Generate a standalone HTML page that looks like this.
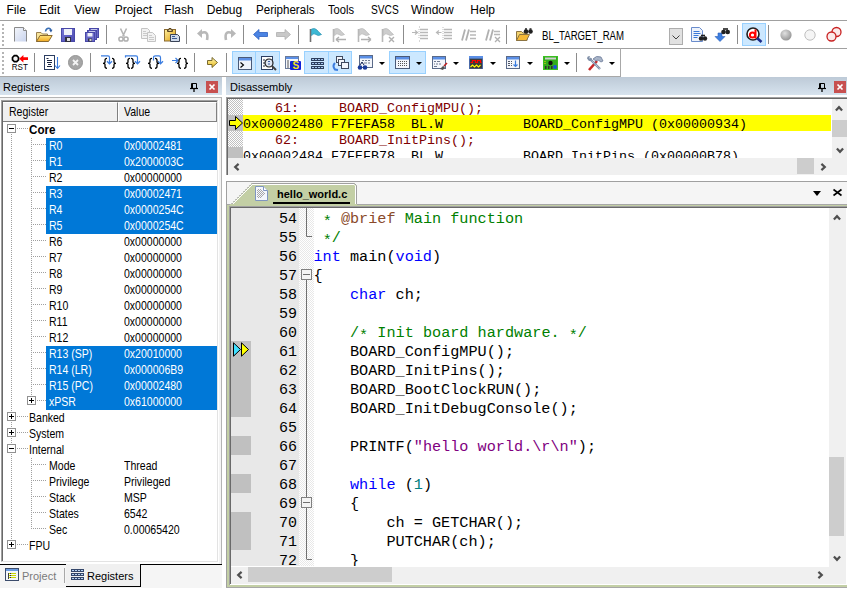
<!DOCTYPE html>
<html><head><meta charset="utf-8">
<style>
*{margin:0;padding:0;box-sizing:border-box}
html,body{width:847px;height:590px;overflow:hidden;background:#fff;position:relative;font-family:"Liberation Sans",sans-serif;font-size:12px;color:#000}
.a{position:absolute}
svg{position:absolute;overflow:visible}
.m{position:absolute;top:3px;font-size:12px;line-height:14px;color:#000;white-space:nowrap}
.grip{position:absolute;width:2px;background-image:linear-gradient(#b4b4b4 2px,transparent 2px);background-size:2px 4px}
.sep{position:absolute;width:1px;background:#8c8c8c}
.hi{position:absolute;background:#cce8ff;border:1px solid #99d1ff}
.title{position:absolute;height:18px;background:linear-gradient(#bdcad7,#d7e3ee)}
.ttext{position:absolute;font-size:11px;line-height:13px;white-space:nowrap}
.close{position:absolute;width:12px;height:12px;background:#c75050}
.rt{position:absolute;height:16px;line-height:15px;font-size:13.5px;white-space:nowrap;transform:scaleX(0.78);transform-origin:0 0}
.dl{position:absolute;left:243px;height:16px;line-height:16px;font-size:13.33px;white-space:pre;font-family:"Liberation Mono",monospace}
.cl{position:absolute;height:19px;line-height:19px;font-size:15.2px;white-space:pre;font-family:"Liberation Mono",monospace}
.ln{position:absolute;width:37px;text-align:right;height:19px;line-height:19px;font-size:15px;font-family:"Liberation Mono",monospace;color:#000}
.kw{color:#0000ff}
.cm{color:#008000}
.st{color:#800080}
.nm{color:#008080}
.as{position:relative;top:3px}
.dx{color:#8a4a2a}
.chk{background-color:#fff;background-image:repeating-conic-gradient(#c0c0c0 0 25%,#fff 0 50%);background-size:2px 2px}
.chk2{background-color:#fff;background-image:repeating-conic-gradient(#e8e8e8 0 25%,#fff 0 50%);background-size:2px 2px}
.dd{position:absolute;width:0;height:0;border-left:3px solid transparent;border-right:3px solid transparent;border-top:3px solid #000}
</style></head><body>

<!-- MENU -->
<div class="m" style="left:6.6px">File</div>
<div class="m" style="left:39.3px">Edit</div>
<div class="m" style="left:74.2px">View</div>
<div class="m" style="left:114.7px">Project</div>
<div class="m" style="left:164.3px">Flash</div>
<div class="m" style="left:206.8px">Debug</div>
<div class="m" style="left:256.3px;transform:scaleX(0.964);transform-origin:0 0">Peripherals</div>
<div class="m" style="left:327.9px;transform:scaleX(0.93);transform-origin:0 0">Tools</div>
<div class="m" style="left:370.6px;transform:scaleX(0.85);transform-origin:0 0">SVCS</div>
<div class="m" style="left:411.0px">Window</div>
<div class="m" style="left:470.3px">Help</div>

<!-- TOOLBARS -->
<div class="a" style="left:0;top:20px;width:847px;height:1px;background:#a0a0a0"></div>
<div class="a" style="left:0;top:48px;width:847px;height:1px;background:#a0a0a0"></div>
<div class="a" style="left:620px;top:48px;width:1px;height:29px;background:#a8a8a8"></div>
<div class="a" style="left:0;top:76px;width:621px;height:1px;background:#a8a8a8"></div>
<div class="grip" style="left:2px;top:24px;height:22px"></div>
<div class="grip" style="left:2px;top:52px;height:22px"></div>
<!-- toolbar1 icons -->
<svg style="left:14px;top:27px" width="13" height="15" viewBox="0 0 13 15"><defs><linearGradient id="gdoc" x1="0" y1="0" x2="1" y2="1"><stop offset="0" stop-color="#f4f6fb"/><stop offset="1" stop-color="#c9d4ee"/></linearGradient></defs><path d="M0.5 14.5V0.5h9l3 3v11" fill="url(#gdoc)" stroke="#8a8a8a"/><path d="M9.5 0.5v3h3" fill="#fff" stroke="#8a8a8a"/></svg>
<svg style="left:36px;top:27px" width="17" height="15" viewBox="0 0 17 15"><defs><linearGradient id="gf" x1="0" y1="0" x2="0" y2="1"><stop offset="0" stop-color="#ffe27a"/><stop offset="1" stop-color="#f0a820"/></linearGradient></defs><path d="M0.5 14.5V5.5h4.5l1.5 1.5h5v7.5z" fill="#f8e49a" stroke="#9a8050"/><path d="M0.5 14.5l3.5-6h12.2l-3.7 6z" fill="url(#gf)" stroke="#8a6a30"/><path d="M9.5 4.5Q10 1 13 1.2Q14.5 1.5 15 3" stroke="#3a6fb5" stroke-width="1.5" fill="none"/><path d="M13 2.8h3.5L15 5.5z" fill="#2c5aa0"/></svg>
<svg style="left:61px;top:28px" width="14" height="14" viewBox="0 0 14 14"><defs><linearGradient id="gs" x1="0" y1="0" x2="1" y2="1"><stop offset="0" stop-color="#7878d8"/><stop offset="1" stop-color="#4a4ab0"/></linearGradient></defs><rect x="0.5" y="0.5" width="13" height="13" fill="url(#gs)" stroke="#4848a8"/><rect x="3" y="1" width="8" height="6" fill="#eef0f8"/><rect x="4" y="9" width="6" height="5" fill="#303040"/><rect x="6" y="10" width="3" height="3" fill="#e0e0e0"/></svg>
<svg style="left:85px;top:28px" width="14" height="14" viewBox="0 0 14 14"><rect x="4.5" y="0.5" width="9" height="9" fill="#6a6ac8" stroke="#4848a8"/><rect x="6" y="1.3" width="6" height="1.5" fill="#eef0f8"/><rect x="2.5" y="2.5" width="9" height="9" fill="#6a6ac8" stroke="#4848a8"/><rect x="4" y="3.3" width="6" height="1.5" fill="#eef0f8"/><rect x="0.5" y="4.5" width="9" height="9" fill="#6a6ac8" stroke="#4848a8"/><rect x="2.5" y="5" width="5" height="3.5" fill="#eef0f8"/><rect x="3" y="10.5" width="4" height="3" fill="#303040"/><rect x="4.5" y="11" width="2" height="2" fill="#d0d0d0"/></svg>
<div class="sep" style="left:106px;top:25px;height:19px"></div>
<svg style="left:118px;top:28px" width="11" height="14" viewBox="0 0 11 14"><path d="M2.5 0.5L6.3 8.5M8.5 0.5L4.7 8.5" stroke="#b4b4b4" stroke-width="1.6"/><circle cx="3" cy="11" r="2.1" fill="none" stroke="#b0b0b0" stroke-width="1.5"/><circle cx="8" cy="11" r="2.1" fill="none" stroke="#b0b0b0" stroke-width="1.5"/></svg>
<svg style="left:141px;top:28px" width="15" height="14" viewBox="0 0 15 14"><path d="M0.5 0.5h6l2 2v8h-8z" fill="#f2f2f2" stroke="#c4c4c4"/><path d="M6.5 4.5h5l3 3v6h-8z" fill="#f2f2f2" stroke="#c4c4c4"/><path d="M2 3.5h3M2 5.5h4M2 7.5h4M8 7.5h3M8 9.5h5M8 11.5h5" stroke="#cacaca"/></svg>
<svg style="left:164px;top:28px" width="16" height="14" viewBox="0 0 16 14"><defs><linearGradient id="gp" x1="0" y1="0" x2="1" y2="1"><stop offset="0" stop-color="#fff0a0"/><stop offset="1" stop-color="#e0a010"/></linearGradient></defs><rect x="0.5" y="1.5" width="11" height="11.5" fill="url(#gp)" stroke="#8a6a30"/><path d="M3.5 3.5h5V2h-1.5V0.5h-2V2h-1.5z" fill="#e8d8a0" stroke="#5a4520"/><path d="M6.5 6.5h7l2 2v5h-9z" fill="#cfdaea" stroke="#3a4458"/><path d="M8 8.5h3M8 10.5h5" stroke="#3a5a90" stroke-width="1"/></svg>
<div class="sep" style="left:186px;top:25px;height:19px"></div>
<svg style="left:197px;top:28px" width="14" height="13" viewBox="0 0 14 13"><path d="M4 5Q12 2 10 12" stroke="#b8b8b8" stroke-width="2.6" fill="none"/><path d="M0 5.5L5 1v9z" fill="#b8b8b8"/></svg>
<svg style="left:222px;top:28px" width="14" height="13" viewBox="0 0 14 13"><path d="M10 5Q2 2 4 12" stroke="#b8b8b8" stroke-width="2.6" fill="none"/><path d="M14 5.5L9 1v9z" fill="#b8b8b8"/></svg>
<div class="sep" style="left:243px;top:25px;height:19px"></div>
<svg style="left:253px;top:29px" width="15" height="11" viewBox="0 0 15 11"><path d="M0.5 5.5L6 0.5v3h8.5v4H6v3z" fill="#4b84e3" stroke="#2d5fc0" stroke-width="0.8"/></svg>
<svg style="left:276px;top:29px" width="15" height="11" viewBox="0 0 15 11"><path d="M14.5 5.5L9 0.5v3H0.5v4H9v3z" fill="#c8c8c8" stroke="#b0b0b0" stroke-width="0.8"/></svg>
<div class="sep" style="left:298px;top:25px;height:19px"></div>
<svg style="left:309px;top:28px" width="13" height="14" viewBox="0 0 13 14"><path d="M1.5 1v13" stroke="#707070" stroke-width="1.6"/><path d="M2.5 1Q6 -0.5 8 2T12.5 6.5Q9 8.5 7 6.5T2.5 7.5z" fill="#3cb8d4" stroke="#2a90b0" stroke-width="0.7"/></svg>
<svg style="left:332px;top:28px" width="15" height="14" viewBox="0 0 15 14"><path d="M1.5 1v13" stroke="#b8b8b8" stroke-width="1.6"/><path d="M2.5 1Q6 -0.5 8 2T12.5 6.5Q9 8.5 7 6.5T2.5 7.5z" fill="#cdcdcd" stroke="#b8b8b8" stroke-width="0.7"/><path d="M4 11.5h10M4 11.5l3-2.5M4 11.5l3 2.5" stroke="#b0b0b0" stroke-width="1.4"/></svg>
<svg style="left:357px;top:28px" width="15" height="14" viewBox="0 0 15 14"><path d="M1.5 1v13" stroke="#b8b8b8" stroke-width="1.6"/><path d="M2.5 1Q6 -0.5 8 2T12.5 6.5Q9 8.5 7 6.5T2.5 7.5z" fill="#cdcdcd" stroke="#b8b8b8" stroke-width="0.7"/><path d="M4 11.5h10M14 11.5l-3-2.5M14 11.5l-3 2.5" stroke="#b0b0b0" stroke-width="1.4"/></svg>
<svg style="left:381px;top:28px" width="15" height="14" viewBox="0 0 15 14"><path d="M1.5 1v13" stroke="#b8b8b8" stroke-width="1.6"/><path d="M2.5 1Q6 -0.5 8 2T12.5 6.5Q9 8.5 7 6.5T2.5 7.5z" fill="#cdcdcd" stroke="#b8b8b8" stroke-width="0.7"/><path d="M8 9l5 5M13 9l-5 5" stroke="#b0b0b0" stroke-width="1.4"/></svg>
<div class="sep" style="left:403px;top:25px;height:19px"></div>
<svg style="left:412px;top:26px" width="17" height="16" viewBox="0 0 17 16"><path d="M7 1h1M7 15h1" stroke="#b0b0b0"/><path d="M8 3.5h8M8 6.5h8M8 9.5h8M8 12.5h8" stroke="#b8b8b8" stroke-width="1.6"/><path d="M0 6.5h5M3 4.5l2.5 2-2.5 2" stroke="#b8b8b8" stroke-width="1.2" fill="none"/><path d="M7 3v10" stroke="#c0c0c0" stroke-dasharray="1 1"/></svg>
<svg style="left:436px;top:26px" width="17" height="16" viewBox="0 0 17 16"><path d="M8 3.5h8M8 6.5h8M8 9.5h8M8 12.5h8" stroke="#b8b8b8" stroke-width="1.6"/><path d="M0.5 6.5h5M3 4.5L0.5 6.5 3 8.5" stroke="#b8b8b8" stroke-width="1.2" fill="none"/><path d="M7 1v14" stroke="#c0c0c0" stroke-dasharray="1 1"/></svg>
<svg style="left:461px;top:29px" width="15" height="12" viewBox="0 0 15 12"><path d="M4 0.5L1 11.5M8 0.5L5 11.5" stroke="#b0b0b0" stroke-width="1.8"/><path d="M9 2.5h6M9 6h6M9 9.5h6" stroke="#b8b8b8" stroke-width="1.3"/></svg>
<svg style="left:485px;top:29px" width="16" height="13" viewBox="0 0 16 13"><path d="M4 0.5L1 11.5M8 0.5L5 11.5" stroke="#b0b0b0" stroke-width="1.8"/><path d="M9 2.5h6M9 5.5h6" stroke="#b8b8b8" stroke-width="1.3"/><path d="M10 8l5 5M15 8l-5 5" stroke="#b0b0b0" stroke-width="1.3"/></svg>
<div class="sep" style="left:506px;top:25px;height:19px"></div>
<svg style="left:516px;top:28px" width="17" height="13" viewBox="0 0 17 13"><path d="M0.5 12.5V3.5h5l1.5 1.5h4v7.5z" fill="#f3d36e" stroke="#8c7443"/><path d="M0.5 12.5l3-6h10l-3 6z" fill="#f5b936" stroke="#8c7443"/><circle cx="10" cy="3.5" r="2.3" fill="#202020"/><circle cx="14.5" cy="3.5" r="2.3" fill="#202020"/><path d="M9 1h2M13.5 1h2" stroke="#202020" stroke-width="1.5"/></svg>
<div class="a" style="left:542px;top:29px;font-size:12px;line-height:14px;white-space:nowrap;transform:scaleX(0.8);transform-origin:0 0">BL_TARGET_RAM</div>
<div class="a" style="left:669px;top:28px;width:14px;height:17px;background:#e1e1e1;border:1px solid #adadad"></div>
<svg style="left:672px;top:35px" width="9" height="5"><path d="M0.5 0.5L4 4 7.5 0.5" stroke="#404040" fill="none"/></svg>
<svg style="left:691px;top:27px" width="16" height="15" viewBox="0 0 16 15"><path d="M0.5 14.5V0.5h8l3 3v11z" fill="#eef3fb" stroke="#6a8ccc"/><path d="M2.5 4.5h6M2.5 6.5h7M2.5 8.5h5M2.5 10.5h4" stroke="#3a78d8"/><circle cx="10" cy="11.5" r="2.2" fill="#202020"/><circle cx="14" cy="11.5" r="2.2" fill="#202020"/><path d="M10 8.5h4" stroke="#202020" stroke-width="1.6"/></svg>
<svg style="left:714px;top:28px" width="16" height="14" viewBox="0 0 16 14"><path d="M4 5v3.5H1l5 5 5-5H8V5z" fill="#3e7fe0" stroke="#2c60b8" stroke-width="0.6"/><circle cx="9.5" cy="4" r="2.3" fill="#202020"/><circle cx="13.7" cy="4" r="2.3" fill="#202020"/><path d="M9 1h5" stroke="#202020" stroke-width="1.6"/></svg>
<div class="sep" style="left:737px;top:25px;height:19px"></div>
<div class="hi" style="left:742px;top:23px;width:24px;height:23px"></div>
<svg style="left:746px;top:27px" width="17" height="16" viewBox="0 0 17 16"><circle cx="7" cy="7" r="6" fill="#fff" stroke="#202020" stroke-width="1.6"/><path d="M11 11l4.5 4" stroke="#1a2a8a" stroke-width="2.6"/><path d="M9.5 2.5v9" stroke="#ff0000" stroke-width="2"/><circle cx="6.5" cy="8" r="2.6" fill="none" stroke="#ff0000" stroke-width="2"/></svg>
<div class="sep" style="left:768px;top:25px;height:19px"></div>
<svg style="left:780px;top:29px" width="12" height="12"><defs><radialGradient id="gb" cx="0.4" cy="0.35" r="0.7"><stop offset="0" stop-color="#e0e0e0"/><stop offset="1" stop-color="#909090"/></radialGradient></defs><circle cx="6" cy="6" r="5.6" fill="url(#gb)"/></svg>
<svg style="left:804px;top:29px" width="12" height="12"><circle cx="6" cy="6" r="5.2" fill="#f5f5f5" stroke="#c0c0c0"/></svg>
<svg style="left:826px;top:27px" width="16" height="15" viewBox="0 0 16 15"><circle cx="10.5" cy="5" r="4.5" fill="#fbeaea" stroke="#c82020" stroke-width="1.3"/><circle cx="5.5" cy="9.5" r="4.5" fill="#fbeaea" stroke="#c82020" stroke-width="1.3"/></svg>

<!-- toolbar2 icons -->
<svg style="left:11px;top:54px" width="18" height="16" viewBox="0 0 18 16"><path d="M3.3 1.7h2.4l1.8 1.8v2.4l-1.8 1.8H3.3L1.5 5.9V3.5z" fill="#f4f4f4" stroke="#000" stroke-width="1.7"/><path d="M8.2 4.7L12.4 1v2.3h4.6v2.8h-4.6v2.3z" fill="#ff0000"/><text x="0.8" y="15.8" font-family="Liberation Sans" font-size="9.5" fill="#000" textLength="16" lengthAdjust="spacingAndGlyphs">RST</text></svg>
<div class="sep" style="left:34px;top:53px;height:19px"></div>
<svg style="left:44px;top:55px" width="17" height="15" viewBox="0 0 17 15"><rect x="0.5" y="0.5" width="10" height="14" fill="#fff" stroke="#2c3e62"/><path d="M2.5 3.5h2M3 5.5h5M3 7.5h5M4 9.5h3M3 11.5h5" stroke="#1a2540"/><path d="M13.5 2v11M11 10.5l2.5 3 2.5-3" stroke="#3b7de0" stroke-width="1.1" fill="none"/></svg>
<svg style="left:68px;top:55px" width="15" height="15"><circle cx="7.5" cy="7.5" r="7" fill="#a6a6a6" stroke="#959595"/><path d="M5 5l5 5M10 5l-5 5" stroke="#f4f4f4" stroke-width="1.8"/></svg>
<div class="sep" style="left:90px;top:53px;height:19px"></div>
<svg style="left:100px;top:55px" width="17" height="14" viewBox="0 0 17 14"><path d="M1 0.8H8Q9.5 0.8 9.5 2.5V8" stroke="#3b7de0" stroke-width="1.2" fill="none"/><path d="M7 6.3l2.5 2.5 2.5-2.5" stroke="#3b7de0" stroke-width="1.3" fill="none"/><path d="M7 3.3Q5 3.3 5 5.3V7.3Q5 8.3 3 8.3Q5 8.3 5 9.3V11.6Q5 13.4 7 13.4" stroke="#000" stroke-width="1.3" fill="none"/><path d="M12 3.3Q14 3.3 14 5.3V7.3Q14 8.3 16 8.3Q14 8.3 14 9.3V11.6Q14 13.4 12 13.4" stroke="#000" stroke-width="1.3" fill="none"/></svg>
<svg style="left:124px;top:55px" width="17" height="14" viewBox="0 0 17 14"><path d="M1.5 2.5V0.8H12Q13.5 0.8 13.5 2.5V8" stroke="#3b7de0" stroke-width="1.2" fill="none"/><path d="M11 6.3l2.5 2.5 2.5-2.5" stroke="#3b7de0" stroke-width="1.3" fill="none"/><path d="M6 3.3Q4 3.3 4 5.3V7.3Q4 8.3 2 8.3Q4 8.3 4 9.3V11.6Q4 13.4 6 13.4" stroke="#000" stroke-width="1.3" fill="none"/><path d="M7 3.3Q9 3.3 9 5.3V7.3Q9 8.3 11 8.3Q9 8.3 9 9.3V11.6Q9 13.4 7 13.4" stroke="#000" stroke-width="1.3" fill="none"/></svg>
<svg style="left:147px;top:55px" width="17" height="14" viewBox="0 0 17 14"><path d="M6.5 5.5V2.5Q6.5 0.8 8.5 0.8H12Q13.5 0.8 13.5 2.5V8" stroke="#3b7de0" stroke-width="1.2" fill="none"/><path d="M11 6.3l2.5 2.5 2.5-2.5" stroke="#3b7de0" stroke-width="1.3" fill="none"/><path d="M5 3.3Q3 3.3 3 5.3V7.3Q3 8.3 1 8.3Q3 8.3 3 9.3V11.6Q3 13.4 5 13.4" stroke="#000" stroke-width="1.3" fill="none"/><path d="M8 3.3Q10 3.3 10 5.3V7.3Q10 8.3 12 8.3Q10 8.3 10 9.3V11.6Q10 13.4 8 13.4" stroke="#000" stroke-width="1.3" fill="none"/></svg>
<svg style="left:171px;top:55px" width="18" height="14" viewBox="0 0 18 14"><path d="M1 5.5h6M4.5 3l2.5 2.5-2.5 2.5" stroke="#3b7de0" stroke-width="1.2" fill="none"/><path d="M10 3.3Q8 3.3 8 5.3V7.3Q8 8.3 6 8.3Q8 8.3 8 9.3V11.6Q8 13.4 10 13.4" stroke="#000" stroke-width="1.3" fill="none"/><path d="M13 3.3Q15 3.3 15 5.3V7.3Q15 8.3 17 8.3Q15 8.3 15 9.3V11.6Q15 13.4 13 13.4" stroke="#000" stroke-width="1.3" fill="none"/></svg>
<div class="sep" style="left:194px;top:53px;height:19px"></div>
<svg style="left:207px;top:57px" width="11" height="11" viewBox="0 0 11 11"><defs><linearGradient id="gya" x1="0" y1="0" x2="0" y2="1"><stop offset="0" stop-color="#fff8b0"/><stop offset="1" stop-color="#e8b820"/></linearGradient></defs><path d="M0.5 3.5h4.5V0.5l5.5 5-5.5 5v-3H0.5z" fill="url(#gya)" stroke="#6a5a20" stroke-width="0.9"/></svg>
<div class="sep" style="left:226px;top:53px;height:19px"></div>
<div class="hi" style="left:232px;top:51px;width:48px;height:23px"></div>
<div class="a" style="left:255px;top:52px;width:1px;height:21px;background:#99d1ff"></div>
<svg style="left:238px;top:57px" width="14" height="13" viewBox="0 0 14 13"><rect x="0.5" y="0.5" width="13" height="12" fill="#f0f4fb" stroke="#4a5a78"/><rect x="1" y="1" width="12" height="2.5" fill="#5b8fe6"/><path d="M2.5 5.5l3 2.5-3 2.5" stroke="#000" stroke-width="1.1" fill="none"/></svg>
<svg style="left:261px;top:56px" width="17" height="15" viewBox="0 0 17 15"><rect x="0.5" y="0.5" width="11" height="13" fill="#fff" stroke="#2c3e62"/><path d="M2 4h2M2 7h2M2 10h2" stroke="#1a2540"/><circle cx="8" cy="7" r="4" fill="#dde6f3" stroke="#202020" stroke-width="1.2"/><path d="M7 5.5h2M7 8h2" stroke="#3a5aa0" stroke-width="1"/><path d="M11 10l4 4" stroke="#404040" stroke-width="2"/></svg>
<svg style="left:285px;top:56px" width="16" height="14" viewBox="0 0 16 14"><rect x="0.5" y="0.5" width="13" height="12" fill="#f4f6fb" stroke="#6a7a98"/><rect x="1" y="1" width="12" height="2" fill="#5b8fe6"/><path d="M3 4v8" stroke="#555"/><rect x="5" y="5" width="11" height="9" rx="1" fill="#1020d8"/><text x="7.5" y="13" font-family="Liberation Sans" font-size="10" font-weight="bold" fill="#f0e020">S</text></svg>
<div class="hi" style="left:304px;top:51px;width:48px;height:23px"></div>
<div class="a" style="left:328px;top:52px;width:1px;height:21px;background:#99d1ff"></div>
<svg style="left:311px;top:58px" width="13" height="11" viewBox="0 0 13 11"><rect x="0" y="0" width="13" height="3" rx="0.5" fill="#2d3f5e"/><rect x="0" y="4" width="13" height="3" rx="0.5" fill="#2d3f5e"/><rect x="0" y="8" width="13" height="3" rx="0.5" fill="#2d3f5e"/><path d="M1 1.5h11M1 5.5h11M1 9.5h11" stroke="#a8c8f0" stroke-dasharray="2 1"/></svg>
<svg style="left:332px;top:56px" width="17" height="15" viewBox="0 0 17 15"><rect x="4.5" y="0.5" width="6" height="6" fill="#f4f6fb" stroke="#404a60"/><rect x="6.5" y="3.5" width="6" height="6" fill="#f4f6fb" stroke="#404a60"/><rect x="9.5" y="6.5" width="7" height="6" fill="#f4f6fb" stroke="#404a60"/><path d="M3 7Q0 10 3 13.5L6 14" stroke="#3b7de0" stroke-width="2" fill="none"/></svg>
<svg style="left:357px;top:55px" width="17" height="15" viewBox="0 0 17 15"><rect x="2.5" y="0.5" width="13" height="12" fill="#f4f6fb" stroke="#5a6a88"/><rect x="3" y="1" width="12" height="2.5" fill="#5b8fe6"/><path d="M5 5.5h2M8 5.5h2M11 5.5h2M4 8h2M7 8h3M11 8h2" stroke="#707a90"/><circle cx="3" cy="12.5" r="2.3" fill="#1a3a9a"/><circle cx="8" cy="12.5" r="2.3" fill="#1a3a9a"/><path d="M3 10l2-3 2 3" stroke="#1a2a5a" fill="none"/></svg>
<div class="dd" style="left:379px;top:62px"></div>
<div class="hi" style="left:389px;top:51px;width:37px;height:23px"></div>
<svg style="left:395px;top:56px" width="15" height="13" viewBox="0 0 15 13"><rect x="0.5" y="0.5" width="14" height="12" fill="#f4f6fb" stroke="#4a5a78"/><rect x="1" y="1" width="13" height="2.5" fill="#5b8fe6"/><g fill="#555"><rect x="3" y="5" width="1" height="1"/><rect x="5" y="5" width="1" height="1"/><rect x="7" y="5" width="1" height="1"/><rect x="9" y="5" width="1" height="1"/><rect x="11" y="5" width="1" height="1"/><rect x="3" y="7" width="1" height="1"/><rect x="5" y="7" width="1" height="1"/><rect x="7" y="7" width="1" height="1"/><rect x="9" y="7" width="1" height="1"/><rect x="11" y="7" width="1" height="1"/><rect x="3" y="9" width="1" height="1"/><rect x="5" y="9" width="1" height="1"/><rect x="7" y="9" width="1" height="1"/><rect x="9" y="9" width="1" height="1"/><rect x="11" y="9" width="1" height="1"/></g></svg>
<div class="dd" style="left:416px;top:62px"></div>
<svg style="left:432px;top:56px" width="16" height="14" viewBox="0 0 16 14"><rect x="0.5" y="0.5" width="13" height="12" fill="#f4f6fb" stroke="#5a6a88"/><rect x="1" y="1" width="12" height="2.5" fill="#5b8fe6"/><path d="M2 5.5h2M5 5.5h3M2 8h1M4 8h2M7 8h2M2 10.5h3" stroke="#707a90"/><path d="M8 13l3-3 2 1-2 3z" fill="#505050"/><path d="M12 10l3-3" stroke="#c02020" stroke-width="1.6"/></svg>
<div class="dd" style="left:453px;top:62px"></div>
<svg style="left:469px;top:56px" width="14" height="13" viewBox="0 0 14 13"><rect x="0" y="0" width="14" height="13" fill="#4a6aa8"/><rect x="1" y="2.5" width="12" height="10" fill="#3a3a3a"/><rect x="0" y="0" width="14" height="2.5" fill="#5b8fe6"/><path d="M1.5 6.5h2v-2h3v2h2v-2h3v2h1" stroke="#ff0000" stroke-width="1.2" fill="none"/><path d="M1.5 11l2-2 2 2 2-2 2 2 2-2" stroke="#ffff00" stroke-width="1.1" fill="none"/></svg>
<div class="dd" style="left:490px;top:62px"></div>
<svg style="left:506px;top:56px" width="14" height="13" viewBox="0 0 14 13"><rect x="0.5" y="0.5" width="13" height="12" fill="#f4f6fb" stroke="#5a6a88"/><rect x="1" y="1" width="12" height="2.5" fill="#5b8fe6"/><path d="M2 5.5h2M2 7.5h2M2 9.5h2M5 5.5h1M5 7.5h1M5 9.5h1" stroke="#505868"/><path d="M9.5 4.5v6M7.5 8.5l2 2 2-2" stroke="#3b7de0" stroke-width="1.2" fill="none"/></svg>
<div class="dd" style="left:527px;top:62px"></div>
<svg style="left:543px;top:56px" width="15" height="14" viewBox="0 0 15 14"><rect x="0" y="0" width="15" height="14" fill="#3ac020"/><rect x="1" y="1" width="13" height="12" fill="#2a9a18" opacity="0.5"/><rect x="2" y="1.5" width="11" height="2" fill="#d0d0d0"/><circle cx="7.5" cy="7" r="2.2" fill="#101010"/><rect x="2" y="10" width="1.5" height="3" fill="#303030"/><rect x="5" y="10" width="1.5" height="3" fill="#303030"/><rect x="8" y="10" width="1.5" height="3" fill="#303030"/><rect x="1.5" y="5" width="1" height="1" fill="#ffe000"/><rect x="1.5" y="7" width="1" height="1" fill="#ffe000"/><circle cx="12" cy="11" r="1.9" fill="#1a50e0"/></svg>
<div class="dd" style="left:564px;top:62px"></div>
<div class="sep" style="left:576px;top:53px;height:19px"></div>
<svg style="left:586px;top:55px" width="18" height="16" viewBox="0 0 18 16"><path d="M3 15L11 6" stroke="#c82828" stroke-width="2.6"/><path d="M7 4Q10 0 15 2L17 6 15 7 12 5 10 6Z" fill="#a8b4c8" stroke="#607090" stroke-width="0.7"/><path d="M3 3L14 14" stroke="#8090a8" stroke-width="2.4"/><path d="M3 3L14 14" stroke="#f0f4fa" stroke-width="0.8" stroke-dasharray="1 1"/><path d="M1 3.5Q1 0.5 4 1L3 3 4 4 6 3Q6 6 3 6Z" fill="#8090a8"/></svg>
<div class="dd" style="left:609px;top:62px"></div>


<!-- REGISTERS PANEL -->
<div class="title" style="left:0;top:77px;width:222px"></div>
<div class="ttext" style="left:3px;top:81px">Registers</div>
<svg style="left:190px;top:83px" width="8" height="9" viewBox="0 0 8 9"><path d="M1.5 0.5h5v5h-5z" fill="none" stroke="#000"/><path d="M2.5 1v4.5" stroke="#000"/><path d="M0 5.5h8" stroke="#000" stroke-width="1.2"/><path d="M4 6v3" stroke="#000" stroke-width="1.3"/></svg>
<div class="close" style="left:206px;top:81px"></div>
<svg style="left:206px;top:81px" width="12" height="12"><path d="M3.5 3.5L8.5 8.5M8.5 3.5L3.5 8.5" stroke="#fff" stroke-width="1.7"/></svg>
<div class="a" style="left:0;top:97px;width:222px;height:467px;background:#f4f4f4;border-top:1px solid #b4b4b4;border-right:1px solid #b4b4b4"></div>

<div class="a" style="left:0;top:100px;width:219px;height:464px;background:#fff"></div>
<div class="a" style="left:1px;top:100px;width:217px;height:462px;background:#fff;border-left:1px solid #a0a0a0;border-top:1px solid #a0a0a0;border-right:1px solid #e3e3e3;border-bottom:1px solid #e3e3e3"></div>
<div class="a" style="left:2px;top:101px;width:215px;height:460px;border-left:1px solid #696969;border-top:1px solid #696969"></div>
<!-- header -->
<div class="a" style="left:3px;top:102px;width:115px;height:20px;background:#f0f0f0;border-top:1px solid #fff;border-right:1px solid #808080;border-bottom:1px solid #808080"></div>
<div class="a" style="left:118px;top:102px;width:99px;height:20px;background:#f0f0f0;border-top:1px solid #fff;border-left:1px solid #fff;border-right:1px solid #808080;border-bottom:1px solid #808080"></div>
<div class="rt" style="left:9px;top:104px">Register</div>
<div class="rt" style="left:124px;top:104px">Value</div>

<svg style="left:0;top:0" width="222" height="590"><g fill="#a0a0a0"><rect x="11" y="134" width="1" height="1"/><rect x="11" y="136" width="1" height="1"/><rect x="11" y="138" width="1" height="1"/><rect x="11" y="140" width="1" height="1"/><rect x="11" y="142" width="1" height="1"/><rect x="11" y="144" width="1" height="1"/><rect x="11" y="146" width="1" height="1"/><rect x="11" y="148" width="1" height="1"/><rect x="11" y="150" width="1" height="1"/><rect x="11" y="152" width="1" height="1"/><rect x="11" y="154" width="1" height="1"/><rect x="11" y="156" width="1" height="1"/><rect x="11" y="158" width="1" height="1"/><rect x="11" y="160" width="1" height="1"/><rect x="11" y="162" width="1" height="1"/><rect x="11" y="164" width="1" height="1"/><rect x="11" y="166" width="1" height="1"/><rect x="11" y="168" width="1" height="1"/><rect x="11" y="170" width="1" height="1"/><rect x="11" y="172" width="1" height="1"/><rect x="11" y="174" width="1" height="1"/><rect x="11" y="176" width="1" height="1"/><rect x="11" y="178" width="1" height="1"/><rect x="11" y="180" width="1" height="1"/><rect x="11" y="182" width="1" height="1"/><rect x="11" y="184" width="1" height="1"/><rect x="11" y="186" width="1" height="1"/><rect x="11" y="188" width="1" height="1"/><rect x="11" y="190" width="1" height="1"/><rect x="11" y="192" width="1" height="1"/><rect x="11" y="194" width="1" height="1"/><rect x="11" y="196" width="1" height="1"/><rect x="11" y="198" width="1" height="1"/><rect x="11" y="200" width="1" height="1"/><rect x="11" y="202" width="1" height="1"/><rect x="11" y="204" width="1" height="1"/><rect x="11" y="206" width="1" height="1"/><rect x="11" y="208" width="1" height="1"/><rect x="11" y="210" width="1" height="1"/><rect x="11" y="212" width="1" height="1"/><rect x="11" y="214" width="1" height="1"/><rect x="11" y="216" width="1" height="1"/><rect x="11" y="218" width="1" height="1"/><rect x="11" y="220" width="1" height="1"/><rect x="11" y="222" width="1" height="1"/><rect x="11" y="224" width="1" height="1"/><rect x="11" y="226" width="1" height="1"/><rect x="11" y="228" width="1" height="1"/><rect x="11" y="230" width="1" height="1"/><rect x="11" y="232" width="1" height="1"/><rect x="11" y="234" width="1" height="1"/><rect x="11" y="236" width="1" height="1"/><rect x="11" y="238" width="1" height="1"/><rect x="11" y="240" width="1" height="1"/><rect x="11" y="242" width="1" height="1"/><rect x="11" y="244" width="1" height="1"/><rect x="11" y="246" width="1" height="1"/><rect x="11" y="248" width="1" height="1"/><rect x="11" y="250" width="1" height="1"/><rect x="11" y="252" width="1" height="1"/><rect x="11" y="254" width="1" height="1"/><rect x="11" y="256" width="1" height="1"/><rect x="11" y="258" width="1" height="1"/><rect x="11" y="260" width="1" height="1"/><rect x="11" y="262" width="1" height="1"/><rect x="11" y="264" width="1" height="1"/><rect x="11" y="266" width="1" height="1"/><rect x="11" y="268" width="1" height="1"/><rect x="11" y="270" width="1" height="1"/><rect x="11" y="272" width="1" height="1"/><rect x="11" y="274" width="1" height="1"/><rect x="11" y="276" width="1" height="1"/><rect x="11" y="278" width="1" height="1"/><rect x="11" y="280" width="1" height="1"/><rect x="11" y="282" width="1" height="1"/><rect x="11" y="284" width="1" height="1"/><rect x="11" y="286" width="1" height="1"/><rect x="11" y="288" width="1" height="1"/><rect x="11" y="290" width="1" height="1"/><rect x="11" y="292" width="1" height="1"/><rect x="11" y="294" width="1" height="1"/><rect x="11" y="296" width="1" height="1"/><rect x="11" y="298" width="1" height="1"/><rect x="11" y="300" width="1" height="1"/><rect x="11" y="302" width="1" height="1"/><rect x="11" y="304" width="1" height="1"/><rect x="11" y="306" width="1" height="1"/><rect x="11" y="308" width="1" height="1"/><rect x="11" y="310" width="1" height="1"/><rect x="11" y="312" width="1" height="1"/><rect x="11" y="314" width="1" height="1"/><rect x="11" y="316" width="1" height="1"/><rect x="11" y="318" width="1" height="1"/><rect x="11" y="320" width="1" height="1"/><rect x="11" y="322" width="1" height="1"/><rect x="11" y="324" width="1" height="1"/><rect x="11" y="326" width="1" height="1"/><rect x="11" y="328" width="1" height="1"/><rect x="11" y="330" width="1" height="1"/><rect x="11" y="332" width="1" height="1"/><rect x="11" y="334" width="1" height="1"/><rect x="11" y="336" width="1" height="1"/><rect x="11" y="338" width="1" height="1"/><rect x="11" y="340" width="1" height="1"/><rect x="11" y="342" width="1" height="1"/><rect x="11" y="344" width="1" height="1"/><rect x="11" y="346" width="1" height="1"/><rect x="11" y="348" width="1" height="1"/><rect x="11" y="350" width="1" height="1"/><rect x="11" y="352" width="1" height="1"/><rect x="11" y="354" width="1" height="1"/><rect x="11" y="356" width="1" height="1"/><rect x="11" y="358" width="1" height="1"/><rect x="11" y="360" width="1" height="1"/><rect x="11" y="362" width="1" height="1"/><rect x="11" y="364" width="1" height="1"/><rect x="11" y="366" width="1" height="1"/><rect x="11" y="368" width="1" height="1"/><rect x="11" y="370" width="1" height="1"/><rect x="11" y="372" width="1" height="1"/><rect x="11" y="374" width="1" height="1"/><rect x="11" y="376" width="1" height="1"/><rect x="11" y="378" width="1" height="1"/><rect x="11" y="380" width="1" height="1"/><rect x="11" y="382" width="1" height="1"/><rect x="11" y="384" width="1" height="1"/><rect x="11" y="386" width="1" height="1"/><rect x="11" y="388" width="1" height="1"/><rect x="11" y="390" width="1" height="1"/><rect x="11" y="392" width="1" height="1"/><rect x="11" y="394" width="1" height="1"/><rect x="11" y="396" width="1" height="1"/><rect x="11" y="398" width="1" height="1"/><rect x="11" y="400" width="1" height="1"/><rect x="11" y="402" width="1" height="1"/><rect x="11" y="404" width="1" height="1"/><rect x="11" y="406" width="1" height="1"/><rect x="11" y="408" width="1" height="1"/><rect x="11" y="410" width="1" height="1"/><rect x="11" y="412" width="1" height="1"/><rect x="11" y="414" width="1" height="1"/><rect x="11" y="416" width="1" height="1"/><rect x="11" y="418" width="1" height="1"/><rect x="11" y="420" width="1" height="1"/><rect x="11" y="422" width="1" height="1"/><rect x="11" y="424" width="1" height="1"/><rect x="11" y="426" width="1" height="1"/><rect x="11" y="428" width="1" height="1"/><rect x="11" y="430" width="1" height="1"/><rect x="11" y="432" width="1" height="1"/><rect x="11" y="434" width="1" height="1"/><rect x="11" y="436" width="1" height="1"/><rect x="11" y="438" width="1" height="1"/><rect x="11" y="440" width="1" height="1"/><rect x="11" y="442" width="1" height="1"/><rect x="11" y="444" width="1" height="1"/><rect x="11" y="446" width="1" height="1"/><rect x="11" y="448" width="1" height="1"/><rect x="11" y="450" width="1" height="1"/><rect x="11" y="452" width="1" height="1"/><rect x="11" y="454" width="1" height="1"/><rect x="11" y="456" width="1" height="1"/><rect x="11" y="458" width="1" height="1"/><rect x="11" y="460" width="1" height="1"/><rect x="11" y="462" width="1" height="1"/><rect x="11" y="464" width="1" height="1"/><rect x="11" y="466" width="1" height="1"/><rect x="11" y="468" width="1" height="1"/><rect x="11" y="470" width="1" height="1"/><rect x="11" y="472" width="1" height="1"/><rect x="11" y="474" width="1" height="1"/><rect x="11" y="476" width="1" height="1"/><rect x="11" y="478" width="1" height="1"/><rect x="11" y="480" width="1" height="1"/><rect x="11" y="482" width="1" height="1"/><rect x="11" y="484" width="1" height="1"/><rect x="11" y="486" width="1" height="1"/><rect x="11" y="488" width="1" height="1"/><rect x="11" y="490" width="1" height="1"/><rect x="11" y="492" width="1" height="1"/><rect x="11" y="494" width="1" height="1"/><rect x="11" y="496" width="1" height="1"/><rect x="11" y="498" width="1" height="1"/><rect x="11" y="500" width="1" height="1"/><rect x="11" y="502" width="1" height="1"/><rect x="11" y="504" width="1" height="1"/><rect x="11" y="506" width="1" height="1"/><rect x="11" y="508" width="1" height="1"/><rect x="11" y="510" width="1" height="1"/><rect x="11" y="512" width="1" height="1"/><rect x="11" y="514" width="1" height="1"/><rect x="11" y="516" width="1" height="1"/><rect x="11" y="518" width="1" height="1"/><rect x="11" y="520" width="1" height="1"/><rect x="11" y="522" width="1" height="1"/><rect x="11" y="524" width="1" height="1"/><rect x="11" y="526" width="1" height="1"/><rect x="11" y="528" width="1" height="1"/><rect x="11" y="530" width="1" height="1"/><rect x="11" y="532" width="1" height="1"/><rect x="11" y="534" width="1" height="1"/><rect x="11" y="536" width="1" height="1"/><rect x="11" y="538" width="1" height="1"/><rect x="11" y="540" width="1" height="1"/><rect x="31" y="138" width="1" height="1"/><rect x="31" y="140" width="1" height="1"/><rect x="31" y="142" width="1" height="1"/><rect x="31" y="144" width="1" height="1"/><rect x="31" y="146" width="1" height="1"/><rect x="31" y="148" width="1" height="1"/><rect x="31" y="150" width="1" height="1"/><rect x="31" y="152" width="1" height="1"/><rect x="31" y="154" width="1" height="1"/><rect x="31" y="156" width="1" height="1"/><rect x="31" y="158" width="1" height="1"/><rect x="31" y="160" width="1" height="1"/><rect x="31" y="162" width="1" height="1"/><rect x="31" y="164" width="1" height="1"/><rect x="31" y="166" width="1" height="1"/><rect x="31" y="168" width="1" height="1"/><rect x="31" y="170" width="1" height="1"/><rect x="31" y="172" width="1" height="1"/><rect x="31" y="174" width="1" height="1"/><rect x="31" y="176" width="1" height="1"/><rect x="31" y="178" width="1" height="1"/><rect x="31" y="180" width="1" height="1"/><rect x="31" y="182" width="1" height="1"/><rect x="31" y="184" width="1" height="1"/><rect x="31" y="186" width="1" height="1"/><rect x="31" y="188" width="1" height="1"/><rect x="31" y="190" width="1" height="1"/><rect x="31" y="192" width="1" height="1"/><rect x="31" y="194" width="1" height="1"/><rect x="31" y="196" width="1" height="1"/><rect x="31" y="198" width="1" height="1"/><rect x="31" y="200" width="1" height="1"/><rect x="31" y="202" width="1" height="1"/><rect x="31" y="204" width="1" height="1"/><rect x="31" y="206" width="1" height="1"/><rect x="31" y="208" width="1" height="1"/><rect x="31" y="210" width="1" height="1"/><rect x="31" y="212" width="1" height="1"/><rect x="31" y="214" width="1" height="1"/><rect x="31" y="216" width="1" height="1"/><rect x="31" y="218" width="1" height="1"/><rect x="31" y="220" width="1" height="1"/><rect x="31" y="222" width="1" height="1"/><rect x="31" y="224" width="1" height="1"/><rect x="31" y="226" width="1" height="1"/><rect x="31" y="228" width="1" height="1"/><rect x="31" y="230" width="1" height="1"/><rect x="31" y="232" width="1" height="1"/><rect x="31" y="234" width="1" height="1"/><rect x="31" y="236" width="1" height="1"/><rect x="31" y="238" width="1" height="1"/><rect x="31" y="240" width="1" height="1"/><rect x="31" y="242" width="1" height="1"/><rect x="31" y="244" width="1" height="1"/><rect x="31" y="246" width="1" height="1"/><rect x="31" y="248" width="1" height="1"/><rect x="31" y="250" width="1" height="1"/><rect x="31" y="252" width="1" height="1"/><rect x="31" y="254" width="1" height="1"/><rect x="31" y="256" width="1" height="1"/><rect x="31" y="258" width="1" height="1"/><rect x="31" y="260" width="1" height="1"/><rect x="31" y="262" width="1" height="1"/><rect x="31" y="264" width="1" height="1"/><rect x="31" y="266" width="1" height="1"/><rect x="31" y="268" width="1" height="1"/><rect x="31" y="270" width="1" height="1"/><rect x="31" y="272" width="1" height="1"/><rect x="31" y="274" width="1" height="1"/><rect x="31" y="276" width="1" height="1"/><rect x="31" y="278" width="1" height="1"/><rect x="31" y="280" width="1" height="1"/><rect x="31" y="282" width="1" height="1"/><rect x="31" y="284" width="1" height="1"/><rect x="31" y="286" width="1" height="1"/><rect x="31" y="288" width="1" height="1"/><rect x="31" y="290" width="1" height="1"/><rect x="31" y="292" width="1" height="1"/><rect x="31" y="294" width="1" height="1"/><rect x="31" y="296" width="1" height="1"/><rect x="31" y="298" width="1" height="1"/><rect x="31" y="300" width="1" height="1"/><rect x="31" y="302" width="1" height="1"/><rect x="31" y="304" width="1" height="1"/><rect x="31" y="306" width="1" height="1"/><rect x="31" y="308" width="1" height="1"/><rect x="31" y="310" width="1" height="1"/><rect x="31" y="312" width="1" height="1"/><rect x="31" y="314" width="1" height="1"/><rect x="31" y="316" width="1" height="1"/><rect x="31" y="318" width="1" height="1"/><rect x="31" y="320" width="1" height="1"/><rect x="31" y="322" width="1" height="1"/><rect x="31" y="324" width="1" height="1"/><rect x="31" y="326" width="1" height="1"/><rect x="31" y="328" width="1" height="1"/><rect x="31" y="330" width="1" height="1"/><rect x="31" y="332" width="1" height="1"/><rect x="31" y="334" width="1" height="1"/><rect x="31" y="336" width="1" height="1"/><rect x="31" y="338" width="1" height="1"/><rect x="31" y="340" width="1" height="1"/><rect x="31" y="342" width="1" height="1"/><rect x="31" y="344" width="1" height="1"/><rect x="31" y="346" width="1" height="1"/><rect x="31" y="348" width="1" height="1"/><rect x="31" y="350" width="1" height="1"/><rect x="31" y="352" width="1" height="1"/><rect x="31" y="354" width="1" height="1"/><rect x="31" y="356" width="1" height="1"/><rect x="31" y="358" width="1" height="1"/><rect x="31" y="360" width="1" height="1"/><rect x="31" y="362" width="1" height="1"/><rect x="31" y="364" width="1" height="1"/><rect x="31" y="366" width="1" height="1"/><rect x="31" y="368" width="1" height="1"/><rect x="31" y="370" width="1" height="1"/><rect x="31" y="372" width="1" height="1"/><rect x="31" y="374" width="1" height="1"/><rect x="31" y="376" width="1" height="1"/><rect x="31" y="378" width="1" height="1"/><rect x="31" y="380" width="1" height="1"/><rect x="31" y="382" width="1" height="1"/><rect x="31" y="384" width="1" height="1"/><rect x="31" y="386" width="1" height="1"/><rect x="31" y="388" width="1" height="1"/><rect x="31" y="390" width="1" height="1"/><rect x="31" y="392" width="1" height="1"/><rect x="31" y="394" width="1" height="1"/><rect x="31" y="396" width="1" height="1"/><rect x="31" y="458" width="1" height="1"/><rect x="31" y="460" width="1" height="1"/><rect x="31" y="462" width="1" height="1"/><rect x="31" y="464" width="1" height="1"/><rect x="31" y="466" width="1" height="1"/><rect x="31" y="468" width="1" height="1"/><rect x="31" y="470" width="1" height="1"/><rect x="31" y="472" width="1" height="1"/><rect x="31" y="474" width="1" height="1"/><rect x="31" y="476" width="1" height="1"/><rect x="31" y="478" width="1" height="1"/><rect x="31" y="480" width="1" height="1"/><rect x="31" y="482" width="1" height="1"/><rect x="31" y="484" width="1" height="1"/><rect x="31" y="486" width="1" height="1"/><rect x="31" y="488" width="1" height="1"/><rect x="31" y="490" width="1" height="1"/><rect x="31" y="492" width="1" height="1"/><rect x="31" y="494" width="1" height="1"/><rect x="31" y="496" width="1" height="1"/><rect x="31" y="498" width="1" height="1"/><rect x="31" y="500" width="1" height="1"/><rect x="31" y="502" width="1" height="1"/><rect x="31" y="504" width="1" height="1"/><rect x="31" y="506" width="1" height="1"/><rect x="31" y="508" width="1" height="1"/><rect x="31" y="510" width="1" height="1"/><rect x="31" y="512" width="1" height="1"/><rect x="31" y="514" width="1" height="1"/><rect x="31" y="516" width="1" height="1"/><rect x="31" y="518" width="1" height="1"/><rect x="31" y="520" width="1" height="1"/><rect x="31" y="522" width="1" height="1"/><rect x="31" y="524" width="1" height="1"/><rect x="31" y="526" width="1" height="1"/><rect x="31" y="528" width="1" height="1"/><rect x="17" y="128" width="1" height="1"/><rect x="19" y="128" width="1" height="1"/><rect x="21" y="128" width="1" height="1"/><rect x="23" y="128" width="1" height="1"/><rect x="25" y="128" width="1" height="1"/><rect x="27" y="128" width="1" height="1"/><rect x="31" y="144" width="1" height="1"/><rect x="33" y="144" width="1" height="1"/><rect x="35" y="144" width="1" height="1"/><rect x="37" y="144" width="1" height="1"/><rect x="39" y="144" width="1" height="1"/><rect x="41" y="144" width="1" height="1"/><rect x="43" y="144" width="1" height="1"/><rect x="45" y="144" width="1" height="1"/><rect x="31" y="160" width="1" height="1"/><rect x="33" y="160" width="1" height="1"/><rect x="35" y="160" width="1" height="1"/><rect x="37" y="160" width="1" height="1"/><rect x="39" y="160" width="1" height="1"/><rect x="41" y="160" width="1" height="1"/><rect x="43" y="160" width="1" height="1"/><rect x="45" y="160" width="1" height="1"/><rect x="31" y="176" width="1" height="1"/><rect x="33" y="176" width="1" height="1"/><rect x="35" y="176" width="1" height="1"/><rect x="37" y="176" width="1" height="1"/><rect x="39" y="176" width="1" height="1"/><rect x="41" y="176" width="1" height="1"/><rect x="43" y="176" width="1" height="1"/><rect x="45" y="176" width="1" height="1"/><rect x="31" y="192" width="1" height="1"/><rect x="33" y="192" width="1" height="1"/><rect x="35" y="192" width="1" height="1"/><rect x="37" y="192" width="1" height="1"/><rect x="39" y="192" width="1" height="1"/><rect x="41" y="192" width="1" height="1"/><rect x="43" y="192" width="1" height="1"/><rect x="45" y="192" width="1" height="1"/><rect x="31" y="208" width="1" height="1"/><rect x="33" y="208" width="1" height="1"/><rect x="35" y="208" width="1" height="1"/><rect x="37" y="208" width="1" height="1"/><rect x="39" y="208" width="1" height="1"/><rect x="41" y="208" width="1" height="1"/><rect x="43" y="208" width="1" height="1"/><rect x="45" y="208" width="1" height="1"/><rect x="31" y="224" width="1" height="1"/><rect x="33" y="224" width="1" height="1"/><rect x="35" y="224" width="1" height="1"/><rect x="37" y="224" width="1" height="1"/><rect x="39" y="224" width="1" height="1"/><rect x="41" y="224" width="1" height="1"/><rect x="43" y="224" width="1" height="1"/><rect x="45" y="224" width="1" height="1"/><rect x="31" y="240" width="1" height="1"/><rect x="33" y="240" width="1" height="1"/><rect x="35" y="240" width="1" height="1"/><rect x="37" y="240" width="1" height="1"/><rect x="39" y="240" width="1" height="1"/><rect x="41" y="240" width="1" height="1"/><rect x="43" y="240" width="1" height="1"/><rect x="45" y="240" width="1" height="1"/><rect x="31" y="256" width="1" height="1"/><rect x="33" y="256" width="1" height="1"/><rect x="35" y="256" width="1" height="1"/><rect x="37" y="256" width="1" height="1"/><rect x="39" y="256" width="1" height="1"/><rect x="41" y="256" width="1" height="1"/><rect x="43" y="256" width="1" height="1"/><rect x="45" y="256" width="1" height="1"/><rect x="31" y="272" width="1" height="1"/><rect x="33" y="272" width="1" height="1"/><rect x="35" y="272" width="1" height="1"/><rect x="37" y="272" width="1" height="1"/><rect x="39" y="272" width="1" height="1"/><rect x="41" y="272" width="1" height="1"/><rect x="43" y="272" width="1" height="1"/><rect x="45" y="272" width="1" height="1"/><rect x="31" y="288" width="1" height="1"/><rect x="33" y="288" width="1" height="1"/><rect x="35" y="288" width="1" height="1"/><rect x="37" y="288" width="1" height="1"/><rect x="39" y="288" width="1" height="1"/><rect x="41" y="288" width="1" height="1"/><rect x="43" y="288" width="1" height="1"/><rect x="45" y="288" width="1" height="1"/><rect x="31" y="304" width="1" height="1"/><rect x="33" y="304" width="1" height="1"/><rect x="35" y="304" width="1" height="1"/><rect x="37" y="304" width="1" height="1"/><rect x="39" y="304" width="1" height="1"/><rect x="41" y="304" width="1" height="1"/><rect x="43" y="304" width="1" height="1"/><rect x="45" y="304" width="1" height="1"/><rect x="31" y="320" width="1" height="1"/><rect x="33" y="320" width="1" height="1"/><rect x="35" y="320" width="1" height="1"/><rect x="37" y="320" width="1" height="1"/><rect x="39" y="320" width="1" height="1"/><rect x="41" y="320" width="1" height="1"/><rect x="43" y="320" width="1" height="1"/><rect x="45" y="320" width="1" height="1"/><rect x="31" y="336" width="1" height="1"/><rect x="33" y="336" width="1" height="1"/><rect x="35" y="336" width="1" height="1"/><rect x="37" y="336" width="1" height="1"/><rect x="39" y="336" width="1" height="1"/><rect x="41" y="336" width="1" height="1"/><rect x="43" y="336" width="1" height="1"/><rect x="45" y="336" width="1" height="1"/><rect x="31" y="352" width="1" height="1"/><rect x="33" y="352" width="1" height="1"/><rect x="35" y="352" width="1" height="1"/><rect x="37" y="352" width="1" height="1"/><rect x="39" y="352" width="1" height="1"/><rect x="41" y="352" width="1" height="1"/><rect x="43" y="352" width="1" height="1"/><rect x="45" y="352" width="1" height="1"/><rect x="31" y="368" width="1" height="1"/><rect x="33" y="368" width="1" height="1"/><rect x="35" y="368" width="1" height="1"/><rect x="37" y="368" width="1" height="1"/><rect x="39" y="368" width="1" height="1"/><rect x="41" y="368" width="1" height="1"/><rect x="43" y="368" width="1" height="1"/><rect x="45" y="368" width="1" height="1"/><rect x="31" y="384" width="1" height="1"/><rect x="33" y="384" width="1" height="1"/><rect x="35" y="384" width="1" height="1"/><rect x="37" y="384" width="1" height="1"/><rect x="39" y="384" width="1" height="1"/><rect x="41" y="384" width="1" height="1"/><rect x="43" y="384" width="1" height="1"/><rect x="45" y="384" width="1" height="1"/><rect x="37" y="400" width="1" height="1"/><rect x="39" y="400" width="1" height="1"/><rect x="41" y="400" width="1" height="1"/><rect x="43" y="400" width="1" height="1"/><rect x="45" y="400" width="1" height="1"/><rect x="17" y="416" width="1" height="1"/><rect x="19" y="416" width="1" height="1"/><rect x="21" y="416" width="1" height="1"/><rect x="23" y="416" width="1" height="1"/><rect x="25" y="416" width="1" height="1"/><rect x="27" y="416" width="1" height="1"/><rect x="17" y="432" width="1" height="1"/><rect x="19" y="432" width="1" height="1"/><rect x="21" y="432" width="1" height="1"/><rect x="23" y="432" width="1" height="1"/><rect x="25" y="432" width="1" height="1"/><rect x="27" y="432" width="1" height="1"/><rect x="17" y="448" width="1" height="1"/><rect x="19" y="448" width="1" height="1"/><rect x="21" y="448" width="1" height="1"/><rect x="23" y="448" width="1" height="1"/><rect x="25" y="448" width="1" height="1"/><rect x="27" y="448" width="1" height="1"/><rect x="31" y="464" width="1" height="1"/><rect x="33" y="464" width="1" height="1"/><rect x="35" y="464" width="1" height="1"/><rect x="37" y="464" width="1" height="1"/><rect x="39" y="464" width="1" height="1"/><rect x="41" y="464" width="1" height="1"/><rect x="43" y="464" width="1" height="1"/><rect x="45" y="464" width="1" height="1"/><rect x="31" y="480" width="1" height="1"/><rect x="33" y="480" width="1" height="1"/><rect x="35" y="480" width="1" height="1"/><rect x="37" y="480" width="1" height="1"/><rect x="39" y="480" width="1" height="1"/><rect x="41" y="480" width="1" height="1"/><rect x="43" y="480" width="1" height="1"/><rect x="45" y="480" width="1" height="1"/><rect x="31" y="496" width="1" height="1"/><rect x="33" y="496" width="1" height="1"/><rect x="35" y="496" width="1" height="1"/><rect x="37" y="496" width="1" height="1"/><rect x="39" y="496" width="1" height="1"/><rect x="41" y="496" width="1" height="1"/><rect x="43" y="496" width="1" height="1"/><rect x="45" y="496" width="1" height="1"/><rect x="31" y="512" width="1" height="1"/><rect x="33" y="512" width="1" height="1"/><rect x="35" y="512" width="1" height="1"/><rect x="37" y="512" width="1" height="1"/><rect x="39" y="512" width="1" height="1"/><rect x="41" y="512" width="1" height="1"/><rect x="43" y="512" width="1" height="1"/><rect x="45" y="512" width="1" height="1"/><rect x="31" y="528" width="1" height="1"/><rect x="33" y="528" width="1" height="1"/><rect x="35" y="528" width="1" height="1"/><rect x="37" y="528" width="1" height="1"/><rect x="39" y="528" width="1" height="1"/><rect x="41" y="528" width="1" height="1"/><rect x="43" y="528" width="1" height="1"/><rect x="45" y="528" width="1" height="1"/><rect x="17" y="544" width="1" height="1"/><rect x="19" y="544" width="1" height="1"/><rect x="21" y="544" width="1" height="1"/><rect x="23" y="544" width="1" height="1"/><rect x="25" y="544" width="1" height="1"/><rect x="27" y="544" width="1" height="1"/></g></svg>
<div class="rt" style="left:29px;top:122px;color:#000;font-weight:bold;transform:scaleX(0.86);">Core</div>
<svg style="left:7px;top:124px" width="9" height="9" viewBox="0 0 9 9"><rect x="0.5" y="0.5" width="8" height="8" fill="#fff" stroke="#919191"/><path d="M2 4.5h5" stroke="#000"/></svg>
<div class="a" style="left:46px;top:138px;width:171px;height:16px;background:#0078d7"></div>
<div class="rt" style="left:49px;top:138px;color:#fff;">R0</div>
<div class="rt" style="left:124px;top:138px;color:#fff">0x00002481</div>
<div class="a" style="left:46px;top:154px;width:171px;height:16px;background:#0078d7"></div>
<div class="rt" style="left:49px;top:154px;color:#fff;">R1</div>
<div class="rt" style="left:124px;top:154px;color:#fff">0x2000003C</div>
<div class="rt" style="left:49px;top:170px;color:#000;">R2</div>
<div class="rt" style="left:124px;top:170px;color:#000">0x00000000</div>
<div class="a" style="left:46px;top:186px;width:171px;height:16px;background:#0078d7"></div>
<div class="rt" style="left:49px;top:186px;color:#fff;">R3</div>
<div class="rt" style="left:124px;top:186px;color:#fff">0x00002471</div>
<div class="a" style="left:46px;top:202px;width:171px;height:16px;background:#0078d7"></div>
<div class="rt" style="left:49px;top:202px;color:#fff;">R4</div>
<div class="rt" style="left:124px;top:202px;color:#fff">0x0000254C</div>
<div class="a" style="left:46px;top:218px;width:171px;height:16px;background:#0078d7"></div>
<div class="rt" style="left:49px;top:218px;color:#fff;">R5</div>
<div class="rt" style="left:124px;top:218px;color:#fff">0x0000254C</div>
<div class="rt" style="left:49px;top:234px;color:#000;">R6</div>
<div class="rt" style="left:124px;top:234px;color:#000">0x00000000</div>
<div class="rt" style="left:49px;top:250px;color:#000;">R7</div>
<div class="rt" style="left:124px;top:250px;color:#000">0x00000000</div>
<div class="rt" style="left:49px;top:266px;color:#000;">R8</div>
<div class="rt" style="left:124px;top:266px;color:#000">0x00000000</div>
<div class="rt" style="left:49px;top:282px;color:#000;">R9</div>
<div class="rt" style="left:124px;top:282px;color:#000">0x00000000</div>
<div class="rt" style="left:49px;top:298px;color:#000;">R10</div>
<div class="rt" style="left:124px;top:298px;color:#000">0x00000000</div>
<div class="rt" style="left:49px;top:314px;color:#000;">R11</div>
<div class="rt" style="left:124px;top:314px;color:#000">0x00000000</div>
<div class="rt" style="left:49px;top:330px;color:#000;">R12</div>
<div class="rt" style="left:124px;top:330px;color:#000">0x00000000</div>
<div class="a" style="left:46px;top:346px;width:171px;height:16px;background:#0078d7"></div>
<div class="rt" style="left:49px;top:346px;color:#fff;">R13 (SP)</div>
<div class="rt" style="left:124px;top:346px;color:#fff">0x20010000</div>
<div class="a" style="left:46px;top:362px;width:171px;height:16px;background:#0078d7"></div>
<div class="rt" style="left:49px;top:362px;color:#fff;">R14 (LR)</div>
<div class="rt" style="left:124px;top:362px;color:#fff">0x000006B9</div>
<div class="a" style="left:46px;top:378px;width:171px;height:16px;background:#0078d7"></div>
<div class="rt" style="left:49px;top:378px;color:#fff;">R15 (PC)</div>
<div class="rt" style="left:124px;top:378px;color:#fff">0x00002480</div>
<div class="a" style="left:46px;top:394px;width:171px;height:16px;background:#0078d7"></div>
<div class="rt" style="left:49px;top:394px;color:#fff;">xPSR</div>
<div class="rt" style="left:124px;top:394px;color:#fff">0x61000000</div>
<svg style="left:27px;top:396px" width="9" height="9" viewBox="0 0 9 9"><rect x="0.5" y="0.5" width="8" height="8" fill="#fff" stroke="#919191"/><path d="M2 4.5h5" stroke="#000"/><path d="M4.5 2v5" stroke="#000"/></svg>
<div class="rt" style="left:29px;top:410px;color:#000;">Banked</div>
<svg style="left:7px;top:412px" width="9" height="9" viewBox="0 0 9 9"><rect x="0.5" y="0.5" width="8" height="8" fill="#fff" stroke="#919191"/><path d="M2 4.5h5" stroke="#000"/><path d="M4.5 2v5" stroke="#000"/></svg>
<div class="rt" style="left:29px;top:426px;color:#000;">System</div>
<svg style="left:7px;top:428px" width="9" height="9" viewBox="0 0 9 9"><rect x="0.5" y="0.5" width="8" height="8" fill="#fff" stroke="#919191"/><path d="M2 4.5h5" stroke="#000"/><path d="M4.5 2v5" stroke="#000"/></svg>
<div class="rt" style="left:29px;top:442px;color:#000;">Internal</div>
<svg style="left:7px;top:444px" width="9" height="9" viewBox="0 0 9 9"><rect x="0.5" y="0.5" width="8" height="8" fill="#fff" stroke="#919191"/><path d="M2 4.5h5" stroke="#000"/></svg>
<div class="rt" style="left:49px;top:458px;color:#000;">Mode</div>
<div class="rt" style="left:124px;top:458px;color:#000">Thread</div>
<div class="rt" style="left:49px;top:474px;color:#000;">Privilege</div>
<div class="rt" style="left:124px;top:474px;color:#000">Privileged</div>
<div class="rt" style="left:49px;top:490px;color:#000;">Stack</div>
<div class="rt" style="left:124px;top:490px;color:#000">MSP</div>
<div class="rt" style="left:49px;top:506px;color:#000;">States</div>
<div class="rt" style="left:124px;top:506px;color:#000">6542</div>
<div class="rt" style="left:49px;top:522px;color:#000;">Sec</div>
<div class="rt" style="left:124px;top:522px;color:#000">0.00065420</div>
<div class="rt" style="left:29px;top:538px;color:#000;">FPU</div>
<svg style="left:7px;top:540px" width="9" height="9" viewBox="0 0 9 9"><rect x="0.5" y="0.5" width="8" height="8" fill="#fff" stroke="#919191"/><path d="M2 4.5h5" stroke="#000"/><path d="M4.5 2v5" stroke="#000"/></svg>

<!-- bottom tabs -->
<div class="a" style="left:0;top:564px;width:222px;height:24px;background:#f5f5f5"></div>
<div class="a" style="left:0;top:564px;width:66px;height:1px;background:#000"></div>
<div class="a" style="left:140px;top:564px;width:82px;height:1px;background:#000"></div>
<div class="a" style="left:66px;top:564px;width:75px;height:23px;background:#f0f0f0;border-right:1px solid #000;border-bottom:1px solid #000"></div>
<div class="sep" style="left:64px;top:568px;height:15px;background:#a8a8a8"></div>
<svg style="left:5px;top:568px" width="14" height="13" viewBox="0 0 14 13"><rect x="0.5" y="0.5" width="13" height="12" fill="#f4f6fa" stroke="#3c4c6c"/><rect x="1" y="1" width="12" height="2" fill="#6a9be0"/><path d="M3 5h1v6H3z" fill="#404040"/><path d="M4 5.5h7M4 7.5h7M4 9.5h7" stroke="#c8d800" stroke-width="1.2"/><path d="M5 5.5h1M5 7.5h1M5 9.5h1" stroke="#303030"/></svg>
<div class="ttext" style="left:22px;top:570px;font-size:11px;color:#7a7a7a">Project</div>
<svg style="left:71px;top:569px" width="13" height="11" viewBox="0 0 13 11"><rect x="0" y="0" width="13" height="3" fill="#34466a"/><rect x="0" y="4" width="13" height="3" fill="#34466a"/><rect x="0" y="8" width="13" height="3" fill="#34466a"/><path d="M1 1.5h11M1 5.5h11M1 9.5h11" stroke="#b9d4f5" stroke-dasharray="2 1"/></svg>
<div class="ttext" style="left:87px;top:570px;font-size:11px">Registers</div>

<!-- DISASSEMBLY -->
<div class="title" style="left:226px;top:77px;width:621px"></div>
<div class="ttext" style="left:230px;top:81px">Disassembly</div>
<svg style="left:818px;top:83px" width="8" height="9" viewBox="0 0 8 9"><path d="M1.5 0.5h5v5h-5z" fill="none" stroke="#000"/><path d="M2.5 1v4.5" stroke="#000"/><path d="M0 5.5h8" stroke="#000" stroke-width="1.2"/><path d="M4 6v3" stroke="#000" stroke-width="1.3"/></svg>
<div class="close" style="left:834px;top:81px"></div>
<svg style="left:834px;top:81px" width="12" height="12"><path d="M3.5 3.5L8.5 8.5M8.5 3.5L3.5 8.5" stroke="#fff" stroke-width="1.7"/></svg>
<div class="a" style="left:226px;top:97px;width:621px;height:78px;background:#fff;border-left:1px solid #a0a0a0;border-top:1px solid #a0a0a0"></div>
<div class="a" style="left:227px;top:98px;width:620px;height:77px;border-left:1px solid #696969;border-top:1px solid #696969"></div>
<div class="a chk" style="left:228px;top:99px;width:15px;height:59px"></div>
<div class="a" style="left:228px;top:115px;width:15px;height:16px;background:#c0c0c0"></div>
<div class="a" style="left:228px;top:147px;width:15px;height:11px;background:#c0c0c0"></div>
<div class="a" style="left:243px;top:115px;width:588px;height:16px;background:#ffff00"></div>
<svg style="left:228px;top:115px" width="16" height="16" viewBox="0 0 16 16"><path d="M1.5 5.5h6v-4l7 6.5-7 6.5v-4h-6z" fill="#ffff00" stroke="#000" stroke-width="1"/></svg>
<div class="dl" style="top:101px;color:#800000">    61:     BOARD_ConfigMPU();</div>
<div class="dl" style="top:117px">0x00002480 F7FEFA58  BL.W          BOARD_ConfigMPU (0x00000934)</div>
<div class="dl" style="top:133px;color:#800000">    62:     BOARD_InitPins();</div>
<div class="dl" style="top:149px">0x00002484 F7FEFB78  BL.W          BOARD_InitPins (0x00000B78)</div>
<div class="a" style="left:228px;top:158px;width:619px;height:17px;background:#f0f0f0"></div>
<div class="a" style="left:832px;top:99px;width:15px;height:59px;background:#f0f0f0"></div>
<div class="a" style="left:832px;top:120px;width:15px;height:17px;background:#cdcdcd"></div>
<div class="a" style="left:797px;top:158px;width:17px;height:16px;background:#cdcdcd"></div>
<svg style="left:835px;top:105px" width="8" height="7" viewBox="0 0 8 7"><path d="M0.9 5.6L4 2.2 7.1 5.6" stroke="#4f4f4f" stroke-width="2.2" fill="none"/></svg>
<svg style="left:836px;top:147px" width="8" height="7" viewBox="0 0 8 7"><path d="M0.9 1.4L4 4.8 7.1 1.4" stroke="#4f4f4f" stroke-width="2.2" fill="none"/></svg>
<svg style="left:233px;top:163px" width="7" height="8" viewBox="0 0 7 8"><path d="M5.6 0.9L2.2 4 5.6 7.1" stroke="#4f4f4f" stroke-width="2.2" fill="none"/></svg>
<svg style="left:820px;top:163px" width="7" height="8" viewBox="0 0 7 8"><path d="M1.4 0.9L4.8 4 1.4 7.1" stroke="#4f4f4f" stroke-width="2.2" fill="none"/></svg>

<!-- EDITOR -->
<div class="a" style="left:226px;top:181px;width:621px;height:1px;background:#a0a0a0"></div>
<div class="a" style="left:226px;top:181px;width:1px;height:407px;background:#a0a0a0"></div>
<div class="a" style="left:227px;top:182px;width:620px;height:22px;background:#f5f5f5"></div>
<div class="a" style="left:227px;top:204px;width:620px;height:1px;background:#a8a8a8"></div>
<svg style="left:227px;top:182px" width="131" height="24" viewBox="0 0 131 24"><path d="M4 23L25 1.5H127.5L129.5 3.5V23Z" fill="#c3cfa5"/><path d="M25.5 1.5H127.5L129.5 3.5V22.5" stroke="#a0a0a0" fill="none"/><path d="M26 2.5H127L128.5 4V22.5" stroke="#fff" fill="none"/><path d="M4.5 22L25.5 1" stroke="#8a8a8a" stroke-width="1" stroke-dasharray="1.41 1.41" fill="none"/><path d="M5.5 22.5L26 2" stroke="#fff" stroke-width="1" fill="none"/><path d="M3 23H130" stroke="#c3cfa5" stroke-width="2"/></svg>
<svg style="left:255px;top:186px" width="13" height="15" viewBox="0 0 13 15"><path d="M0.5 0.5h8l4 4v10h-12z" fill="#f4f7fc" stroke="#8096c0"/><path d="M8.5 0.5v4h4" fill="#fff" stroke="#8096c0"/><g fill="#a8a8a8"><rect x="3" y="3" width="1" height="1"/><rect x="5" y="3" width="1" height="1"/><rect x="2" y="4" width="1" height="1"/><rect x="4" y="4" width="1" height="1"/><rect x="6" y="4" width="1" height="1"/><rect x="3" y="5" width="1" height="1"/><rect x="5" y="5" width="1" height="1"/><rect x="7" y="5" width="1" height="1"/><rect x="2" y="6" width="1" height="1"/><rect x="4" y="6" width="1" height="1"/><rect x="6" y="6" width="1" height="1"/><rect x="8" y="6" width="1" height="1"/><rect x="3" y="7" width="1" height="1"/><rect x="5" y="7" width="1" height="1"/><rect x="7" y="7" width="1" height="1"/><rect x="9" y="7" width="1" height="1"/><rect x="2" y="8" width="1" height="1"/><rect x="4" y="8" width="1" height="1"/><rect x="6" y="8" width="1" height="1"/><rect x="8" y="8" width="1" height="1"/><rect x="3" y="9" width="1" height="1"/><rect x="5" y="9" width="1" height="1"/><rect x="7" y="9" width="1" height="1"/><rect x="2" y="10" width="1" height="1"/><rect x="4" y="10" width="1" height="1"/><rect x="6" y="10" width="1" height="1"/><rect x="3" y="11" width="1" height="1"/><rect x="5" y="11" width="1" height="1"/></g></svg>
<div class="ttext" style="left:277px;top:188px;font-size:11px;font-weight:bold">hello_world.c</div>
<div class="a" style="left:273px;top:202px;width:77px;height:2px;background:#000"></div>
<div class="a" style="left:813px;top:191px;width:0;height:0;border-left:4.5px solid transparent;border-right:4.5px solid transparent;border-top:5px solid #000"></div>
<svg style="left:833px;top:189px" width="9" height="7"><path d="M0.5 0.5L8.5 6.5M8.5 0.5L0.5 6.5" stroke="#000" stroke-width="1.6"/></svg>

<div class="a" style="left:227px;top:205px;width:620px;height:1px;background:#c3cfa5"></div>
<div class="a" style="left:227px;top:205px;width:2px;height:382px;background:#c3cfa5"></div>
<div class="a" style="left:227px;top:585px;width:620px;height:2px;background:#c3cfa5"></div>
<div class="a" style="left:226px;top:587px;width:621px;height:1px;background:#a8a8a8"></div>
<div class="a" style="left:229px;top:206px;width:618px;height:379px;background:#fff;border-left:1px solid #a0a0a0;border-top:1px solid #a0a0a0"></div>
<div class="a" style="left:230px;top:207px;width:617px;height:377px;border-left:1px solid #696969;border-top:1px solid #696969"></div>
<div class="a" style="left:231px;top:208px;width:68px;height:358px;background:#e8e8e8"></div>
<div class="a chk2" style="left:299px;top:208px;width:15px;height:358px"></div>
<div class="a" style="left:231px;top:341px;width:20px;height:76px;background:#c0c0c0"></div>
<div class="a" style="left:231px;top:436px;width:20px;height:19px;background:#c0c0c0"></div>
<div class="a" style="left:231px;top:474px;width:20px;height:19px;background:#c0c0c0"></div>
<div class="a" style="left:231px;top:512px;width:20px;height:38px;background:#c0c0c0"></div>
<svg style="left:232px;top:342px" width="18" height="15" viewBox="0 0 18 15"><path d="M1.5 0.8L8.5 7.5 1.5 14.2Z" fill="#40e0ff" stroke="#000"/><path d="M9.5 0.8L16.5 7.5 9.5 14.2Z" fill="#ffff00" stroke="#000"/></svg>
<div class="a" style="left:231px;top:208px;width:598px;height:358px;overflow:hidden">
<svg style="left:0;top:0" width="598" height="359"><path d="M75.5 0V28.5H81" stroke="#707070" fill="none"/><rect x="70.5" y="61.5" width="10" height="10" fill="#f4f4f4" stroke="#808080"/><path d="M72 66.5h7" stroke="#707070"/><path d="M75.5 72V289M75.5 300V351" stroke="#707070" fill="none"/><rect x="70.5" y="289.5" width="10" height="10" fill="#f4f4f4" stroke="#808080"/><path d="M72 294.5h7" stroke="#707070"/><path d="M75.5 351.5H81" stroke="#707070" fill="none"/></svg>
<div class="ln" style="left:29px;top:2px">54</div>
<div class="cl" style="left:82.5px;top:2px"><span class="cm"> <span class="as">*</span> <span class="dx">@brief</span> Main function</span></div>
<div class="ln" style="left:29px;top:21px">55</div>
<div class="cl" style="left:82.5px;top:21px"><span class="cm"> <span class="as">*</span>/</span></div>
<div class="ln" style="left:29px;top:40px">56</div>
<div class="cl" style="left:82.5px;top:40px"><span class="kw">int</span> main(<span class="kw">void</span>)</div>
<div class="ln" style="left:29px;top:59px">57</div>
<div class="cl" style="left:82.5px;top:59px">{</div>
<div class="ln" style="left:29px;top:78px">58</div>
<div class="cl" style="left:82.5px;top:78px">    <span class="kw">char</span> ch;</div>
<div class="ln" style="left:29px;top:97px">59</div>
<div class="cl" style="left:82.5px;top:97px"></div>
<div class="ln" style="left:29px;top:116px">60</div>
<div class="cl" style="left:82.5px;top:116px">    <span class="cm">/<span class="as">*</span> Init board hardware. <span class="as">*</span>/</span></div>
<div class="ln" style="left:29px;top:135px">61</div>
<div class="cl" style="left:82.5px;top:135px">    BOARD_ConfigMPU();</div>
<div class="ln" style="left:29px;top:154px">62</div>
<div class="cl" style="left:82.5px;top:154px">    BOARD_InitPins();</div>
<div class="ln" style="left:29px;top:173px">63</div>
<div class="cl" style="left:82.5px;top:173px">    BOARD_BootClockRUN();</div>
<div class="ln" style="left:29px;top:192px">64</div>
<div class="cl" style="left:82.5px;top:192px">    BOARD_InitDebugConsole();</div>
<div class="ln" style="left:29px;top:211px">65</div>
<div class="cl" style="left:82.5px;top:211px"></div>
<div class="ln" style="left:29px;top:230px">66</div>
<div class="cl" style="left:82.5px;top:230px">    PRINTF(<span class="st">"hello world.\r\n"</span>);</div>
<div class="ln" style="left:29px;top:249px">67</div>
<div class="cl" style="left:82.5px;top:249px"></div>
<div class="ln" style="left:29px;top:268px">68</div>
<div class="cl" style="left:82.5px;top:268px">    <span class="kw">while</span> (<span class="nm">1</span>)</div>
<div class="ln" style="left:29px;top:287px">69</div>
<div class="cl" style="left:82.5px;top:287px">    {</div>
<div class="ln" style="left:29px;top:306px">70</div>
<div class="cl" style="left:82.5px;top:306px">        ch = GETCHAR();</div>
<div class="ln" style="left:29px;top:325px">71</div>
<div class="cl" style="left:82.5px;top:325px">        PUTCHAR(ch);</div>
<div class="ln" style="left:29px;top:344px">72</div>
<div class="cl" style="left:82.5px;top:344px">    }</div>
</div>
<div class="a" style="left:829px;top:208px;width:17px;height:376px;background:#f0f0f0"></div>
<div class="a" style="left:829px;top:457px;width:15px;height:79px;background:#cdcdcd"></div>
<div class="a" style="left:231px;top:567px;width:598px;height:17px;background:#f0f0f0"></div>
<div class="a" style="left:248px;top:567px;width:144px;height:15px;background:#cdcdcd"></div>
<svg style="left:833px;top:214px" width="8" height="7" viewBox="0 0 8 7"><path d="M0.9 5.6L4 2.2 7.1 5.6" stroke="#4f4f4f" stroke-width="2.2" fill="none"/></svg>
<svg style="left:833px;top:555px" width="8" height="7" viewBox="0 0 8 7"><path d="M0.9 1.4L4 4.8 7.1 1.4" stroke="#4f4f4f" stroke-width="2.2" fill="none"/></svg>
<svg style="left:236px;top:571px" width="7" height="8" viewBox="0 0 7 8"><path d="M5.6 0.9L2.2 4 5.6 7.1" stroke="#4f4f4f" stroke-width="2.2" fill="none"/></svg>
<svg style="left:817px;top:571px" width="7" height="8" viewBox="0 0 7 8"><path d="M1.4 0.9L4.8 4 1.4 7.1" stroke="#4f4f4f" stroke-width="2.2" fill="none"/></svg>

</body></html>
